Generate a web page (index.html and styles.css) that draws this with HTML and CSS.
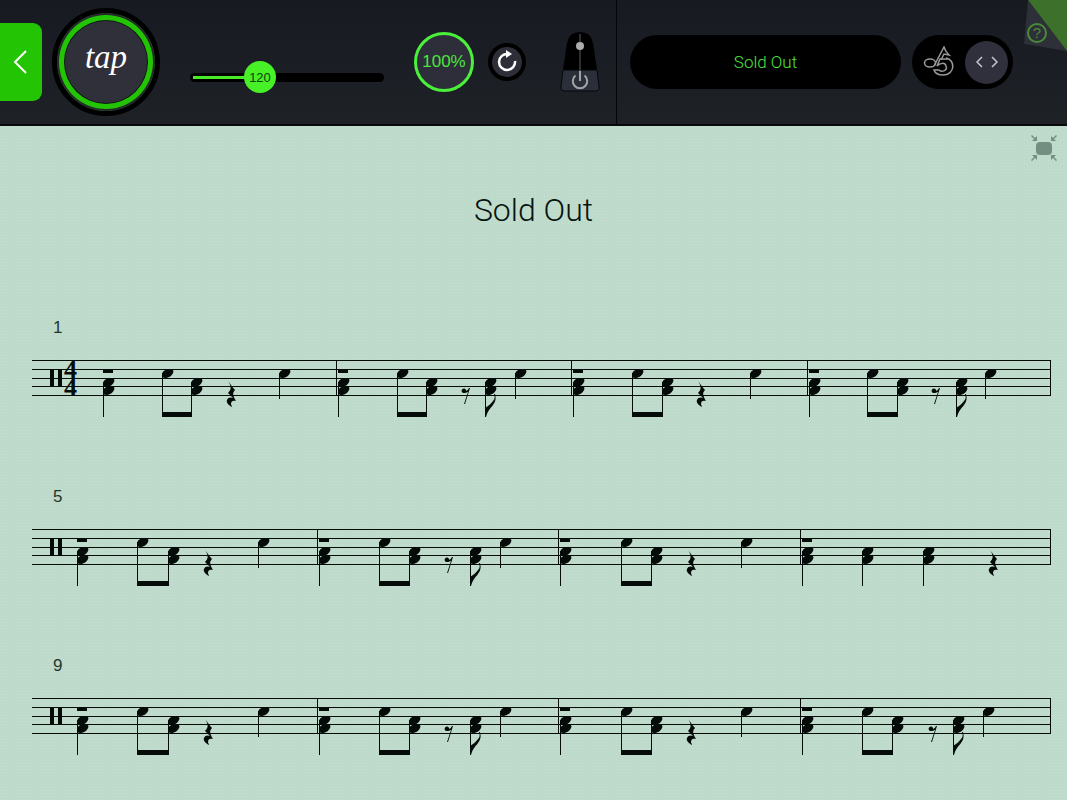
FILE: index.html
```html
<!DOCTYPE html>
<html lang="en">
<head>
	<meta charset="UTF-8">
	<title>Sold Out</title>
	<meta name="viewport" content="width=device-width, initial-scale=1">
	<link rel="stylesheet" href="styles.css">
</head>
<body>
	<header class="toolbar">
		<div class="transport">
			<button type="button" class="btn-back" aria-label="Back">
				<svg width="16" height="26" viewBox="0 0 16 26"><path d="M14 2 3 13l11 11" fill="none" stroke="#fff" stroke-width="2"/></svg>
			</button>
			<button type="button" class="btn-tap"><span>tap</span></button>
			<div class="tempo">
				<input type="range" id="tempo" min="40" max="280" value="120" aria-label="Tempo">
				<output class="tempo-value" for="tempo" id="tempoValue">120</output>
			</div>
			<button type="button" class="btn-zoom">100%</button>
			<button type="button" class="btn-loop" aria-label="Repeat">
				<svg width="22" height="24" viewBox="0 0 22 24">
					<path d="M12 4A8 8 0 1 0 19 11" fill="none" stroke="#fff" stroke-width="2.500"/>
					<path d="M10 0l6 4-6 4z" fill="#fff"/>
				</svg>
			</button>
			<button type="button" class="btn-metronome" aria-label="Metronome">
				<svg width="40" height="60" viewBox="0 0 40 60">
					<path d="M3 38 7 11Q9 0 20 0T33 11L37 38z" fill="#000"/>
					<path d="M3 38H37L39 54Q40 59 35 59H5Q0 59 1 54z" fill="#2b2f39" stroke="#05070b"/>
					<path d="M20 2V42" stroke="#5c5d60" fill="none"/>
					<circle cx="20" cy="14" r="4" fill="#aaabad"/>
					<path d="M15.500 43.500A7.200 7.200 0 1 0 24.500 43.500M20 39V49" fill="none" stroke="#a0a3a8" stroke-width="2"/>
				</svg>
			</button>
		</div>
		<div class="song">
			<button type="button" class="song-name">Sold Out</button>
			<div class="view-switch">
				<button type="button" class="btn-notation" aria-label="Notation">
					<svg width="32" height="32" viewBox="0 0 32 32" fill="none" stroke="#999" stroke-width="1.500">
						<ellipse cx="8" cy="17" rx="5.500" ry="4"/>
						<path d="M12 20 22 1C23 5 25 7 27 9L22 8 19 14"/>
						<path d="M24 12C34 14 33 29 21 29 16 29 13 27 12 24H17C20 27 26 24 24 20 23 16 18 17 15 20L18 13H26"/>
					</svg>
				</button>
				<button type="button" class="btn-expand" aria-label="Previous or next">
					<svg width="22" height="12" viewBox="0 0 22 12"><path d="M6 1 1 6l5 5M16 1l5 5-5 5" fill="none" stroke="#c5c7d2" stroke-width="1.500"/></svg>
				</button>
			</div>
		</div>
		<button type="button" class="btn-help" aria-label="Help">
			<svg width="44" height="52" viewBox="0 0 44 52">
				<path d="M5 0 44 51 1 44z" fill="#2d2f39"/>
				<path d="M5 0H44V51z" fill="#3c702b"/>
				<circle cx="14" cy="33" r="9" fill="none" stroke="#498c36" stroke-width="2"/>
				<text x="14" y="38" class="help-mark">?</text>
			</svg>
		</button>
	</header>

	<main class="sheet">
		<div class="sheet-tools">
			<button type="button" class="btn-fit" aria-label="Full screen">
				<svg width="26" height="26" viewBox="0 0 26 26" fill="#728f82">
					<rect x="5" y="7" width="16" height="13" rx="4"/>
					<path id="arrow" d="M0 1 1 0 4 3 6 1V6H1L3 4z"/>
					<use href="#arrow" transform="translate(26 0) scale(-1 1)"/>
					<use href="#arrow" transform="translate(0 26) scale(1 -1)"/>
					<use href="#arrow" transform="translate(26 26) scale(-1 -1)"/>
				</svg>
			</button>
		</div>
		<h1>Sold Out</h1>
		<div class="score" id="score"></div>
	</main>

	<svg class="glyphs" width="0" height="0" aria-hidden="true">
		<defs>
			<path id="head" d="M0 2C0-2 4-4 8-4 11-4 12-2 11 0 10 3 6 5 3 5 1 5 0 4 0 2z"/>
			<path id="rest4" d="M2 63C5 67 7 70 9 72 6 75 7 78 10 83 7 82 5 83 5 86 5 87 6 88 6 89 2 87 0 84 1 82 2 79 5 79 7 80L2 75C5 72 6 69 2 63z"/>
			<path id="rest8" d="M9 70 4 86H3L7 74C5 75 3 75 2 75A2.300 2.300 0 1 1 5 72C5 74 7 72 8 70z"/>
			<path id="flag" d="M0 99V90C3 88 6 86 8 83 10 81 10 79 9 76L10 76C11 80 11 83 8 87 5 91 3 92 1 99z"/>
		</defs>
	</svg>

<script>
	var staff_lines = [42, 51, 60, 68, 77];

	function rect(x, y, w, h) {
		return '<rect x="' + Math.round(x) + '" y="' + y + '" width="' + w + '" height="' + h + '"/>';
	}
	function glyph(name, x, y) {
		return '<use href="#' + name + '" x="' + Math.round(x) + '" y="' + y + '"/>';
	}
	// snare above kick, one shared stem
	function chord(x) {
		return glyph('head', x, 64) + glyph('head', x, 72) + rect(x, 64, 1, 35);
	}
	function tom(x, length) {
		return glyph('head', x, 55) + rect(x, 55, 1, length);
	}
	function beamed(x, u) {
		return tom(x, 44) + chord(x + u) + rect(x, 94, Math.round(u) + 1, 5);
	}

	// u : width of an eighth note
	var patterns = {
		a: function(x, u) {
			return chord(x) + beamed(x + u * 2, u) + glyph('rest4', x + u * 4 + 5, 0) + tom(x + u * 6, 26);
		},
		b: function(x, u) {
			return chord(x) + beamed(x + u * 2, u) + glyph('rest8', x + u * 4 + 5, 0) +
				chord(x + u * 5) + glyph('flag', x + u * 5, 0) + tom(x + u * 6, 26);
		},
		c: function(x, u) {
			return chord(x) + chord(x + u * 2) + chord(x + u * 4) + glyph('rest4', x + u * 6 + 5, 0);
		}
	};

	var systems = [
		{ number: 1, start: 71, u: 29.4, bars: 'abab', time: true },
		{ number: 5, start: 45, u: 30.2, bars: 'abac' },
		{ number: 9, start: 45, u: 30.2, bars: 'abab' }
	];

	function drawSystem(system) {
		var out = '<text x="21" y="15" class="bar-number">' + system.number + '</text>';
		for (var i = 0; i < staff_lines.length; i++) {
			out += rect(0, staff_lines[i], 1019, 1);
		}
		out += rect(18, 51, 4, 18) + rect(26, 51, 4, 18);
		if (system.time) {
			out += '<text x="32" y="60" class="time">4</text><text x="32" y="78" class="time">4</text>';
		}
		for (var j = 0; j < system.bars.length; j++) {
			var x = system.start + system.u * 8 * j;
			if (j > 0) {
				out += rect(x - 2, 42, 1, 36);
			}
			out += rect(x, 52, 10, 3) + patterns[system.bars[j]](x, system.u);
		}
		out += rect(1018, 42, 1, 36);
		return '<svg class="system" viewBox="0 0 1019 110">' + out + '</svg>';
	}

	document.getElementById('score').innerHTML = systems.map(drawSystem).join('');

	var tempo = document.getElementById('tempo');
	tempo.oninput = function() {
		var ratio = (tempo.value - tempo.min) / (tempo.max - tempo.min);
		var output = document.getElementById('tempoValue');
		output.value = tempo.value;
		tempo.parentNode.style.setProperty('--ratio', ratio);
	};
	tempo.oninput();
</script>
</body>
</html>
```
FILE: styles.css
```css
* { box-sizing: border-box; }
body {
	margin: 0;
	color: #07130d;
	background-color: #bddacb;
	background-image: radial-gradient(rgba(255,255,255,0.12) 1px, transparent 1px);
	background-size: 3px 3px;
	font-family: "Liberation Sans", Arial, sans-serif;
}
button { display: flex; align-items: center; justify-content: center; flex: none; border: none; padding: 0; background: none; font: inherit; cursor: pointer; }
svg { display: block; }

/* toolbar */
.toolbar { position: relative; display: flex; height: 126px; background: linear-gradient(#171a21, #1e2126); border-bottom: 2px solid #08090b; }
.transport { display: flex; align-items: center; flex: 0 1 617px; padding-right: 16px; border-right: 1px solid #040507; }
.btn-back { width: 42px; height: 78px; padding-right: 2px; border-radius: 0 9px 9px 0; background: #23c403; }
.btn-tap { width: 108px; height: 108px; margin: 0 30px 0 10px; border: 5px solid #000; border-radius: 50%; background: #2f303a; box-shadow: inset 0 0 0 2px #25282c, inset 0 0 0 7px #23c403, inset 0 0 0 8px #101915; color: #fff; font-family: "Liberation Serif", serif; font-size: 33px; font-style: italic; }
.btn-tap span { padding-bottom: 10px; }

.tempo { --ratio: 0.333; position: relative; flex: 1; min-width: 100px; height: 32px; margin-top: 30px; }
.tempo input { display: block; width: 100%; height: 32px; margin: 0; -webkit-appearance: none; appearance: none; background: none; }
.tempo input::-webkit-slider-runnable-track { height: 9px; border-radius: 5px; background: linear-gradient(#48eb27, #48eb27) 3px 3px / calc(var(--ratio) * 100%) 3px no-repeat #000; }
.tempo input::-webkit-slider-thumb { -webkit-appearance: none; width: 32px; height: 32px; margin-top: -12px; border-radius: 50%; background: #48f127; }
.tempo-value { position: absolute; top: 0; left: calc(var(--ratio) * (100% - 32px)); width: 32px; line-height: 33px; text-align: center; font-size: 13px; color: #0b4304; pointer-events: none; }

.btn-zoom { width: 60px; height: 60px; margin: 0 14px 0 30px; border: 3px solid #4af03a; border-radius: 50%; background: #2d2e39; color: #4ce43d; font-size: 17px; }
.btn-loop { width: 38px; height: 38px; margin-right: 34px; border: 4px solid #000; border-radius: 50%; background: #2d2e38; }

.song { display: flex; align-items: center; flex: 1; gap: 11px; padding: 0 54px 0 13px; }
.song-name { flex: 1; height: 54px; border-radius: 27px; background: #000; color: #4ce43d; font-family: Roboto, "Liberation Sans", sans-serif; font-size: 17px; font-weight: 300; }
.view-switch { display: flex; align-items: center; justify-content: space-between; width: 101px; height: 54px; padding: 0 5px 0 10px; border-radius: 27px; background: #000; }
.btn-expand { width: 43px; height: 43px; border-radius: 50%; background: #2f303b; }
.btn-help { position: absolute; top: 0; right: 0; }
.help-mark { font-size: 15px; text-anchor: middle; fill: #498c36; }

/* sheet */
.sheet { padding: 9px 16px 32px 32px; }
.sheet-tools { display: flex; justify-content: flex-end; }
.btn-fit { margin-right: -6px; }
h1 { margin: 29px 0 87px; padding-right: 16px; text-align: center; font-family: Roboto, "Liberation Sans", sans-serif; font-size: 32px; line-height: 41px; font-weight: 300; }
.score { display: flex; flex-direction: column; gap: 59px; }
.system { width: 100%; height: auto; fill: #050b08; }
.system rect { shape-rendering: crispEdges; }
.bar-number { font-size: 17px; fill: #23362c; }
.time { font-family: "Liberation Serif", serif; font-size: 26px; font-weight: bold; }
.glyphs { position: absolute; }
```
